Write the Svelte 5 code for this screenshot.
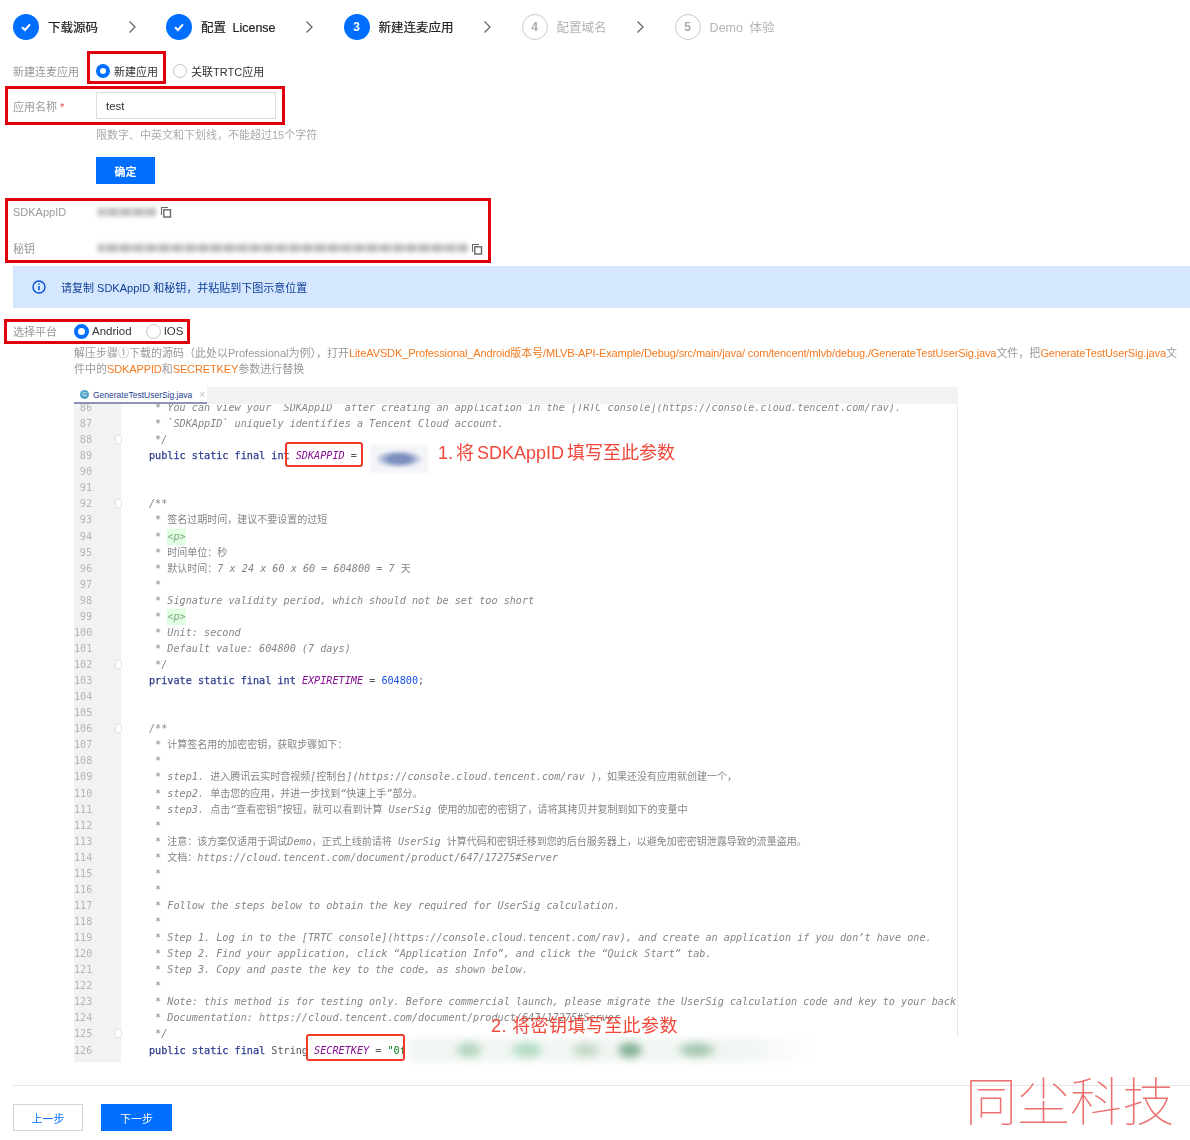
<script lang="ts">
// Create-application step of the setup wizard, with the annotated code screenshot below.
const steps = [
  { label: "下载源码", state: "done", mark: "" },
  { label: "配置 License", state: "done", mark: "" },
  { label: "新建连麦应用", state: "active", mark: "3" },
  { label: "配置域名", state: "todo", mark: "4" },
  { label: "Demo 体验", state: "todo", mark: "5" },
];

type Seg = [string, string];

const kw = (s: string): Seg => ["kw", s];
const con = (s: string): Seg => ["con", s];
const txt = (s: string): Seg => ["pl", s];

// Comment lines are italic for latin text only; the CJK glyphs stay upright.
function comment(s: string): Seg[] {
  return (s.match(/[\u3000-\u9fff\uff00-\uffef]+|[^\u3000-\u9fff\uff00-\uffef]+/g) ?? []).map((part) =>
    /[\u3000-\u9fff\uff00-\uffef]/.test(part) ? (["cn", part] as Seg) : (["cm", part] as Seg),
  );
}

const code: { fold?: boolean; segs: Seg[] }[] = [
  { segs: comment(" * You can view your `SDKAppID` after creating an application in the [TRTC console](https://console.cloud.tencent.com/rav).") },
  { segs: comment(" * `SDKAppID` uniquely identifies a Tencent Cloud account.") },
  { fold: true, segs: comment(" */") },
  { segs: [kw("public static final int "), con("SDKAPPID"), txt(" = ")] },
  { segs: [] },
  { segs: [] },
  { fold: true, segs: comment("/**") },
  { segs: comment(" * 签名过期时间，建议不要设置的过短") },
  { segs: [...comment(" * "), ["tag", "<p>"]] },
  { segs: comment(" * 时间单位：秒") },
  { segs: comment(" * 默认时间：7 x 24 x 60 x 60 = 604800 = 7 天") },
  { segs: comment(" *") },
  { segs: comment(" * Signature validity period, which should not be set too short") },
  { segs: [...comment(" * "), ["tag", "<p>"]] },
  { segs: comment(" * Unit: second") },
  { segs: comment(" * Default value: 604800 (7 days)") },
  { fold: true, segs: comment(" */") },
  { segs: [kw("private static final int "), con("EXPIRETIME"), txt(" = "), ["num", "604800"], txt(";")] },
  { segs: [] },
  { segs: [] },
  { fold: true, segs: comment("/**") },
  { segs: comment(" * 计算签名用的加密密钥，获取步骤如下：") },
  { segs: comment(" *") },
  { segs: comment(" * step1. 进入腾讯云实时音视频[控制台](https://console.cloud.tencent.com/rav )，如果还没有应用就创建一个，") },
  { segs: comment(" * step2. 单击您的应用，并进一步找到“快速上手”部分。") },
  { segs: comment(" * step3. 点击“查看密钥”按钮，就可以看到计算 UserSig 使用的加密的密钥了，请将其拷贝并复制到如下的变量中") },
  { segs: comment(" *") },
  { segs: comment(" * 注意：该方案仅适用于调试Demo，正式上线前请将 UserSig 计算代码和密钥迁移到您的后台服务器上，以避免加密密钥泄露导致的流量盗用。") },
  { segs: comment(" * 文档：https://cloud.tencent.com/document/product/647/17275#Server") },
  { segs: comment(" *") },
  { segs: comment(" *") },
  { segs: comment(" * Follow the steps below to obtain the key required for UserSig calculation.") },
  { segs: comment(" *") },
  { segs: comment(" * Step 1. Log in to the [TRTC console](https://console.cloud.tencent.com/rav), and create an application if you don’t have one.") },
  { segs: comment(" * Step 2. Find your application, click “Application Info”, and click the “Quick Start” tab.") },
  { segs: comment(" * Step 3. Copy and paste the key to the code, as shown below.") },
  { segs: comment(" *") },
  { segs: comment(" * Note: this method is for testing only. Before commercial launch, please migrate the UserSig calculation code and key to your back") },
  { segs: comment(" * Documentation: https://cloud.tencent.com/document/product/647/17275#Server") },
  { fold: true, segs: comment(" */") },
  { segs: [kw("public static final "), txt("String "), con("SECRETKEY"), txt(" = "), ["str", "\"0f"]] },
];
</script>

{#snippet copyIcon()}
  <svg class="copy" width="12" height="12" viewBox="0 0 12 12" fill="none" stroke="#666" aria-hidden="true">
    <path d="M8 1.5H1.5V9" stroke-width="1.1" />
    <rect x="3.8" y="3.8" width="6.7" height="7.2" stroke-width="1.4" />
  </svg>
{/snippet}

<div class="page">
  <nav class="steps">
    {#each steps as step, i (step.label)}
      <div class="step {step.state}">
        <span class="circle">
          {#if step.state === "done"}
            <svg width="14" height="14" viewBox="0 0 14 14" fill="none" stroke="#fff" stroke-width="2" aria-hidden="true">
              <path d="M3 7.2 6 10l5-5.6" />
            </svg>
          {:else}
            {step.mark}
          {/if}
        </span>
        <span class="step-label">{step.label}</span>
      </div>
      {#if i < steps.length - 1}
        <svg class="chevron" width="9" height="14" viewBox="0 0 9 14" fill="none" stroke="#666" stroke-width="1.3" aria-hidden="true">
          <path d="M1.5 1.5 7 7l-5.5 5.5" />
        </svg>
      {/if}
    {/each}
  </nav>

  <div class="row first">
    <span class="label">新建连麦应用</span>
    <span class="radios">
      <span class="radio on"></span><span class="radio-text">新建应用</span>
      <span class="radio off"></span><span class="radio-text">关联TRTC应用</span>
    </span>
  </div>

  <div class="row name-row">
    <span class="label">应用名称 <i class="req">*</i></span>
    <div class="input">test</div>
  </div>
  <p class="help">限数字、中英文和下划线，不能超过15个字符</p>
  <button type="button" class="primary confirm">确定</button>

  <div class="row id-row">
    <span class="label">SDKAppID</span>
    <span class="masked short"></span>
    {@render copyIcon()}
  </div>
  <div class="row key-row">
    <span class="label">秘钥</span>
    <span class="masked long"></span>
    {@render copyIcon()}
  </div>

  <div class="alert">
    <svg width="14" height="14" viewBox="0 0 14 14" fill="none" stroke="#0052d9" aria-hidden="true">
      <circle cx="7" cy="7" r="6" stroke-width="1.4" />
      <path d="M7 6v4.2M7 3.4v1.4" stroke-width="1.5" />
    </svg>
    <span>请复制 SDKAppID 和秘钥，并粘贴到下图示意位置</span>
  </div>

  <div class="row platform">
    <span class="label">选择平台</span>
    <span class="radio on big"></span><span class="radio-text plat">Andriod</span>
    <span class="radio off big ios"></span><span class="radio-text plat">IOS</span>
  </div>

  <p class="desc">
    解压步骤①下载的源码（此处以Professional为例），打开<b>LiteAVSDK_Professional_Android版本号/MLVB-API-Example/Debug/src/main/java/ com/tencent/mlvb/debug./GenerateTestUserSig.java</b>文件，把<b>GenerateTestUserSig.java</b>文件中的<b>SDKAPPID</b>和<b>SECRETKEY</b>参数进行替换
  </p>

  <figure class="shot">
    <div class="tabbar">
      <div class="tab">
        <span class="tab-icon">C</span>
        <span class="tab-name">GenerateTestUserSig.java</span>
        <span class="tab-x">×</span>
      </div>
    </div>
    <div class="editor">
      <ol class="lines">
        {#each code as line, i (i)}
          <li>
            <span class="no">{86 + i}</span>
            <span class="gut">{#if line.fold}<span class="fold"></span>{/if}</span>
            <span class="src">{#each line.segs as seg, j (j)}<span class={seg[0]}>{seg[1]}</span>{/each}</span>
          </li>
        {/each}
      </ol>
    </div>
    <span class="blur-a"></span>
    <span class="blur-b"></span>
    <span class="mark mark-a"></span>
    <span class="mark mark-b"></span>
    <span class="note note-a">1. 将 SDKAppID 填写至此参数</span>
    <span class="note note-b">2. 将密钥填写至此参数</span>
  </figure>

  <footer class="foot">
    <button type="button" class="ghost">上一步</button>
    <button type="button" class="primary next">下一步</button>
  </footer>

  <span class="box box-1"></span>
  <span class="box box-2"></span>
  <span class="box box-3"></span>
  <span class="box box-4"></span>
  <span class="stamp">同尘科技</span>
</div>

<style>
  :global(body) {
    margin: 0;
    background: #fff;
  }
  .page {
    position: relative;
    width: 1190px;
    height: 1140px;
    overflow: hidden;
    box-sizing: border-box;
    padding: 14px 0 0 13px;
    font-family: "Liberation Sans", "Noto Sans CJK SC", sans-serif;
    font-size: 11px;
    color: #333;
    filter: blur(0.3px);
  }
  .steps {
    display: flex;
    align-items: center;
    height: 26px;
  }
  .step {
    display: flex;
    align-items: center;
    gap: 9px;
  }
  .circle {
    display: flex;
    align-items: center;
    justify-content: center;
    width: 26px;
    height: 26px;
    box-sizing: border-box;
    border-radius: 50%;
    background: #006eff;
    color: #fff;
    font-size: 12px;
    font-weight: 700;
  }
  .todo .circle {
    background: #fff;
    border: 1px solid #c8c8c8;
    color: #aaa;
  }
  .step-label {
    font-size: 12.5px;
    word-spacing: 3px;
    padding-bottom: 2px;
    color: #222;
    -webkit-text-stroke: 0.2px #222;
  }
  .todo .step-label {
    color: #b4b4b4;
    -webkit-text-stroke: 0;
  }
  .chevron {
    margin: 0 29.5px;
  }
  .row {
    display: flex;
    align-items: center;
  }
  .label {
    width: 83px;
    flex: none;
    color: #999;
  }
  .req {
    color: #e54545;
    font-style: normal;
  }
  .first {
    margin-top: 22px;
    height: 18px;
  }
  .radios {
    display: flex;
    align-items: center;
  }
  .radio {
    display: inline-block;
    width: 14px;
    height: 14px;
    box-sizing: border-box;
    border-radius: 50%;
    flex: none;
  }
  .radio.big {
    width: 15px;
    height: 15px;
  }
  .radio.on {
    border: 4px solid #006eff;
    background: #fff;
  }
  .radio.off {
    border: 1px solid #c4c4c4;
    background: #fff;
  }
  .radio-text {
    margin: 0 15px 0 4px;
    color: #333;
  }
  .radio-text.plat {
    margin: 0 20px 0 3px;
    font-size: 11.5px;
  }
  .ios {
    margin-left: -6px;
  }
  .name-row {
    margin-top: 12px;
  }
  .input {
    width: 180px;
    height: 27px;
    box-sizing: border-box;
    border: 1px solid #ddd;
    padding-left: 9px;
    line-height: 26px;
    color: #333;
    font-size: 11.5px;
  }
  .help {
    margin: 9px 0 0 83px;
    line-height: 14px;
    color: #aaa;
  }
  .primary {
    background: #006eff;
    color: #fff;
    border: 0;
    font: inherit;
    padding: 0;
  }
  .confirm {
    display: block;
    width: 59px;
    height: 27px;
    margin: 15px 0 0 83px;
    font-weight: 700;
  }
  .id-row {
    margin-top: 21px;
    height: 14px;
  }
  .key-row {
    margin-top: 22px;
    height: 14px;
  }
  .masked {
    display: block;
    height: 8px;
    filter: blur(2.5px);
    background: repeating-linear-gradient(90deg, #b4b4b4 0 5px, #d8d8d8 5px 8px, #c2c2c2 8px 13px);
  }
  .short {
    width: 58px;
    margin-left: 2px;
  }
  .long {
    width: 370px;
    margin-left: 2px;
  }
  .copy {
    margin-left: 4px;
  }
  .key-row .copy {
    margin-left: 3px;
    margin-top: 2px;
  }
  .alert {
    display: flex;
    align-items: center;
    gap: 15px;
    height: 42px;
    margin-top: 11px;
    padding-left: 19px;
    background: #d5e7ff;
    color: #0f3f94;
  }
  .platform {
    margin-top: 15px;
    height: 16px;
    color: #333;
  }
  .platform .label {
    width: 61px;
  }
  .desc {
    width: 1106px;
    margin: 6px 0 0 61px;
    line-height: 16px;
    color: #999;
    font-size: 11px;
  }
  .desc b {
    color: #f47a20;
    font-weight: 400;
    letter-spacing: -0.12px;
  }
  .shot {
    position: relative;
    width: 884px;
    height: 675px;
    margin: 10px 0 0 61px;
  }
  .tabbar {
    height: 17px;
    background: #f2f2f2;
    position: relative;
    z-index: 1;
  }
  .tab {
    display: flex;
    align-items: center;
    gap: 4px;
    width: 133px;
    height: 17px;
    box-sizing: border-box;
    padding-left: 6px;
    background: #fff;
    border-bottom: 2px solid #8c93b8;
    font-size: 8.5px;
  }
  .tab-icon {
    width: 9px;
    height: 9px;
    border-radius: 50%;
    background: #4fa6c9;
    color: #fff;
    font-size: 6px;
    line-height: 9px;
    text-align: center;
  }
  .tab-name {
    color: #25408f;
  }
  .tab-x {
    color: #bbb;
    margin-left: 3px;
    font-size: 10px;
  }
  .editor {
    height: 658px;
    overflow: hidden;
    background-image:
      linear-gradient(90deg, #f2f2f2 0 47px, transparent 47px),
      linear-gradient(90deg, transparent 883px, #e8e8e8 883px 884px, transparent 884px);
    background-size: 100% 100%, 100% 633px;
    background-repeat: no-repeat;
  }
  .lines {
    list-style: none;
    margin: -4px 0 0;
    padding: 0;
    font-family: "DejaVu Sans Mono", "Noto Sans CJK SC", monospace;
    font-size: 10.17px;
    color: #858585;
  }
  .lines li {
    display: flex;
    height: 16.07px;
    line-height: 16.07px;
    white-space: pre;
  }
  .no {
    width: 18px;
    flex: none;
    text-align: right;
    color: #b5b5b5;
  }
  .gut {
    position: relative;
    width: 57px;
    flex: none;
  }
  .fold {
    position: absolute;
    left: 23px;
    top: 3px;
    width: 7px;
    height: 9px;
    box-sizing: border-box;
    border: 1px solid #e4e4e4;
    border-radius: 2px;
    background: #fff;
  }
  .src {
    flex: none;
  }
  .cm {
    font-style: italic;
    color: #858585;
  }
  .cn {
    font-size: 10px;
    color: #858585;
  }
  .pl {
    color: #555;
  }
  .kw {
    color: #2d3c8c;
    -webkit-text-stroke: 0.25px #2d3c8c;
  }
  .con {
    color: #871094;
    font-style: italic;
  }
  .num {
    color: #1750eb;
  }
  .str {
    color: #067d17;
  }
  .tag {
    background: #e3ffe3;
    color: #7aa87a;
    font-style: italic;
    display: inline-block;
    height: 16px;
  }
  .blur-a {
    position: absolute;
    left: 296px;
    top: 58px;
    width: 58px;
    height: 28px;
    background: radial-gradient(ellipse 24px 9px at 50% 50%, #7c8fc0 0 45%, rgba(255, 255, 255, 0) 100%), #f4f5f8;
    filter: blur(1.5px);
  }
  .blur-b {
    position: absolute;
    left: 336px;
    top: 651px;
    width: 405px;
    height: 24px;
    filter: blur(3.5px);
    background:
      radial-gradient(ellipse 16px 10px at 59px 50%, #b6d7c1 0 50%, transparent),
      radial-gradient(ellipse 19px 10px at 117px 50%, #b5ddc7 0 50%, transparent),
      radial-gradient(ellipse 17px 10px at 176px 50%, #c8dacb 0 50%, transparent),
      radial-gradient(ellipse 15px 10px at 220px 50%, #85b398 0 50%, transparent),
      radial-gradient(ellipse 22px 9px at 287px 50%, #a5c8b1 0 50%, transparent),
      linear-gradient(90deg, #f1f6f2 0 82%, #fff 100%);
  }
  .mark {
    position: absolute;
    border: 2px solid #ee3b2b;
    border-radius: 3px;
    box-sizing: border-box;
  }
  .mark-a {
    left: 211px;
    top: 55px;
    width: 78px;
    height: 25px;
  }
  .mark-b {
    left: 232px;
    top: 647px;
    width: 99px;
    height: 27px;
  }
  .note {
    position: absolute;
    font-size: 18px;
    line-height: 24px;
    color: #f0473b;
    white-space: nowrap;
  }
  .note-a {
    left: 364px;
    top: 54px;
    word-spacing: -2px;
  }
  .note-b {
    left: 417px;
    top: 627px;
    letter-spacing: 0.4px;
  }
  .foot {
    display: flex;
    gap: 18px;
    height: 47px;
    margin-top: 23px;
    padding-top: 18px;
    box-sizing: border-box;
    border-top: 1px solid #e6e6e6;
  }
  .ghost {
    width: 70px;
    height: 27px;
    background: #fff;
    border: 1px solid #cfd5de;
    color: #006eff;
    font: inherit;
    padding: 0;
  }
  .next {
    width: 71px;
    height: 27px;
  }
  .box {
    position: absolute;
    border: 3px solid #e0000c;
    box-sizing: border-box;
  }
  .box-1 {
    left: 87px;
    top: 51px;
    width: 79px;
    height: 33px;
  }
  .box-2 {
    left: 5px;
    top: 86px;
    width: 280px;
    height: 39px;
  }
  .box-3 {
    left: 5px;
    top: 198px;
    width: 486px;
    height: 65px;
  }
  .box-4 {
    left: 4px;
    top: 319px;
    width: 186px;
    height: 25px;
  }
  .stamp {
    position: absolute;
    left: 965px;
    top: 1068px;
    font-size: 52px;
    line-height: 70px;
    letter-spacing: 0.5px;
    font-weight: 100;
    color: #ec7070;
    white-space: nowrap;
  }
</style>
